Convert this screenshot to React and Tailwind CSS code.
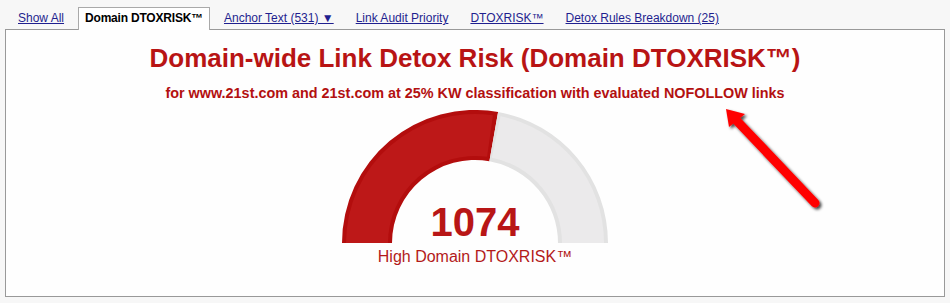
import React from 'react';

const tabs = [
  { label: 'Show All' },
  { label: 'Domain DTOXRISK™', active: true },
  { label: 'Anchor Text (531) ▼' },
  { label: 'Link Audit Priority' },
  { label: 'DTOXRISK™' },
  { label: 'Detox Rules Breakdown (25)' },
];

const Gauge = () => {
  // center 135,133 ; outer r 133 ; inner r 83 ; value boundary at ~80deg
  return (
    <div className="relative w-[270px] h-[134px] mx-auto mt-[8px]">
      <svg width="270" height="134" viewBox="0 0 270 134" className="block">
        <path d="M2 133 A133 133 0 0 1 158.1 2 L149.4 51.3 A83 83 0 0 0 52 133 Z" fill="#b30d0d" />
        <path d="M6 133 A129 129 0 0 1 152.96 5.25 L147.11 46.85 A87 87 0 0 0 48 133 Z" fill="#bd1818" />
        <path d="M158.1 2 A133 133 0 0 1 268 133 L218 133 A83 83 0 0 0 149.4 51.3 Z" fill="#e2e2e2" />
        <path d="M160.5 6.2 A129 129 0 0 1 264 133 L222 133 A87 87 0 0 0 151.8 47.7 Z" fill="#ebeaeb" />
      </svg>
      <div className="absolute left-0 right-0 top-[92px] text-center text-[40px] leading-[40px] font-bold text-[#b81616]">
        1074
      </div>
    </div>
  );
};

const Arrow = () => (
  <svg width="140" height="130" viewBox="0 0 140 130" className="absolute left-[695px] top-[61px]">
    <defs>
      <filter id="shadow" x="-20%" y="-20%" width="150%" height="150%">
        <feDropShadow dx="2" dy="2" stdDeviation="1.6" floodColor="#000" floodOpacity="0.75" />
      </filter>
    </defs>
    <g filter="url(#shadow)">
      <line x1="36" y1="30" x2="114" y2="112" stroke="#ff0000" strokeWidth="9" strokeLinecap="round" />
      <polygon points="25,18 44,23 28,36" fill="#ff0000" />
    </g>
  </svg>
);

export default function App() {
  return (
    <div className="min-h-[303px] bg-[#f7f7f7] pt-[7px] font-['Liberation_Sans',Arial,sans-serif]">
      <div className="flex items-end gap-[6px] pl-[10px] relative z-10">
        {tabs.map((t) =>
          t.active ? (
            <div
              key={t.label}
              className="px-[6px] pt-[3px] pb-[5px] -mb-px border border-b-0 border-[#a9a9a9] bg-white text-[12px] leading-[14px] font-bold text-black tracking-[-0.2px]"
            >
              {t.label}
            </div>
          ) : (
            <a
              key={t.label}
              href="#"
              className="px-2 pt-[4px] pb-[4px] text-[12px] leading-[14px] text-[#1f1f8f] underline"
            >
              {t.label}
            </a>
          )
        )}
      </div>
      <div className="relative mx-[5px] h-[268px] border border-[#999] bg-[#fefefe] pt-[13px]">
        <h1 className="text-center text-[26px] leading-[30px] font-bold text-[#b81414]">
          Domain-wide Link Detox Risk (Domain DTOXRISK™)
        </h1>
        <p className="mt-[12px] text-center text-[14.4px] leading-[17px] font-bold text-[#b31010]">
          for www.21st.com and 21st.com at 25% KW classification with evaluated NOFOLLOW links
        </p>
        <Gauge />
        <div className="mt-[4px] text-center text-[16px] leading-[18px] text-[#b31a1a]">
          High Domain DTOXRISK™
        </div>
        <Arrow />
      </div>
    </div>
  );
}
